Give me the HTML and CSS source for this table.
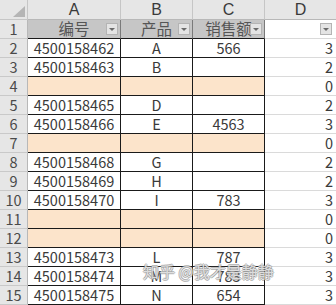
FILE: index.html
```html
<!DOCTYPE html>
<html>
<head>
<meta charset="utf-8">
<link rel="stylesheet" href="styles.css">
</head>
<body>
<div class="sheet">
  <div class="grid">
    <div class="corner"><svg class="tri" width="12" height="11" viewBox="0 0 12 11"><polygon points="12,0 12,11 0,11" fill="#b5b5b5"/></svg></div>
    <div class="colh">A</div>
    <div class="colh">B</div>
    <div class="colh">C</div>
    <div class="colh">D</div>

    <div class="rowh">1</div>
    <div class="cell hdr">编号<span class="dd"></span></div>
    <div class="cell hdr">产品<span class="dd"></span></div>
    <div class="cell hdr">销售额<span class="dd"></span></div>
    <div class="dcell dhdr"><span class="dd"></span></div>

    <div class="rowh">2</div>
    <div class="cell">4500158462</div><div class="cell">A</div><div class="cell">566</div><div class="dcell">3</div>

    <div class="rowh">3</div>
    <div class="cell">4500158463</div><div class="cell">B</div><div class="cell"></div><div class="dcell">2</div>

    <div class="rowh">4</div>
    <div class="cell peach"></div><div class="cell peach"></div><div class="cell peach"></div><div class="dcell">0</div>

    <div class="rowh">5</div>
    <div class="cell">4500158465</div><div class="cell">D</div><div class="cell"></div><div class="dcell">2</div>

    <div class="rowh">6</div>
    <div class="cell">4500158466</div><div class="cell">E</div><div class="cell">4563</div><div class="dcell">3</div>

    <div class="rowh">7</div>
    <div class="cell peach"></div><div class="cell peach"></div><div class="cell peach"></div><div class="dcell">0</div>

    <div class="rowh">8</div>
    <div class="cell">4500158468</div><div class="cell">G</div><div class="cell"></div><div class="dcell">2</div>

    <div class="rowh">9</div>
    <div class="cell">4500158469</div><div class="cell">H</div><div class="cell"></div><div class="dcell">2</div>

    <div class="rowh">10</div>
    <div class="cell">4500158470</div><div class="cell">I</div><div class="cell">783</div><div class="dcell">3</div>

    <div class="rowh">11</div>
    <div class="cell peach"></div><div class="cell peach"></div><div class="cell peach"></div><div class="dcell">0</div>

    <div class="rowh">12</div>
    <div class="cell peach"></div><div class="cell peach"></div><div class="cell peach"></div><div class="dcell">0</div>

    <div class="rowh">13</div>
    <div class="cell">4500158473</div><div class="cell">L</div><div class="cell">787</div><div class="dcell">3</div>

    <div class="rowh">14</div>
    <div class="cell">4500158474</div><div class="cell">M</div><div class="cell">783</div><div class="dcell">3</div>

    <div class="rowh">15</div>
    <div class="cell">4500158475</div><div class="cell">N</div><div class="cell">654</div><div class="dcell">3</div>
  </div>
  <div class="watermark">知乎 @我才是静静</div>
</div>
</body>
</html>
```

FILE: styles.css
```css
html, body {
  margin: 0;
  padding: 0;
  background: #ffffff;
  overflow: hidden;
}
.sheet {
  position: relative;
  width: 336px;
  height: 305px;
  overflow: hidden;
  font-family: "Noto Sans CJK SC", "Liberation Sans", sans-serif;
  font-size: 14.5px;
  color: #3a3a3a;
}
.grid {
  display: grid;
  grid-template-columns: 28px 93px 72px 72px 72px;
  grid-template-rows: 20px repeat(15, 19px);
}
.grid > div {
  box-sizing: border-box;
  display: flex;
  align-items: center;
  justify-content: center;
  line-height: 1;
  white-space: nowrap;
}
.corner {
  background: #e6e6e6;
  border-right: 1px solid #c6c6c6;
  border-bottom: 1px solid #c6c6c6;
  position: relative;
}
.tri {
  position: absolute;
  right: 2px;
  bottom: 2px;
}
.colh {
  background: #e6e6e6;
  border-right: 1px solid #c6c6c6;
  border-bottom: 1px solid #b8b8b8;
  color: #3a3a3a;
  font-size: 16px;
  font-family: "Liberation Sans", sans-serif;
}
.rowh {
  background: #e6e6e6;
  border-right: 1px solid #b8b8b8;
  border-bottom: 1px solid #c9c9c9;
  color: #4a4a4a;
  font-size: 14.5px;
}
.cell {
  border-right: 1px solid #1a1a1a;
  border-bottom: 1px solid #1a1a1a;
  background: #ffffff;
}
.hdr {
  background: #c6c6c6;
  position: relative;
  color: #555555;
  font-size: 15.5px;
  border-right-color: #7a7a7a;
}
.peach {
  background: #fce4cb;
}
.dcell {
  border-right: 1px solid #dadada;
  border-bottom: 1px solid #dadada;
  justify-content: flex-end !important;
  padding-right: 3px;
}
.dhdr {
  position: relative;
}
.dd {
  position: absolute;
  right: 2px;
  top: 3px;
  width: 12px;
  height: 12px;
  box-sizing: border-box;
  background: #e4e4e4;
  border: 1px solid #b4b4b4;
}
.dd::after {
  content: "";
  position: absolute;
  left: 2px;
  top: 4px;
  border-left: 3px solid transparent;
  border-right: 3px solid transparent;
  border-top: 3px solid #6a6a6a;
}
.dhdr .dd {
  right: 4px;
}
.watermark {
  position: absolute;
  left: 143px;
  top: 263px;
  font-size: 16px;
  line-height: 1;
  color: rgba(255, 255, 255, 0.7);
  text-shadow: 1px 0 0 rgba(130,130,130,0.55), -1px 0 0 rgba(130,130,130,0.55), 0 1px 0 rgba(130,130,130,0.55), 0 -1px 0 rgba(130,130,130,0.55);
  white-space: nowrap;
}
```
